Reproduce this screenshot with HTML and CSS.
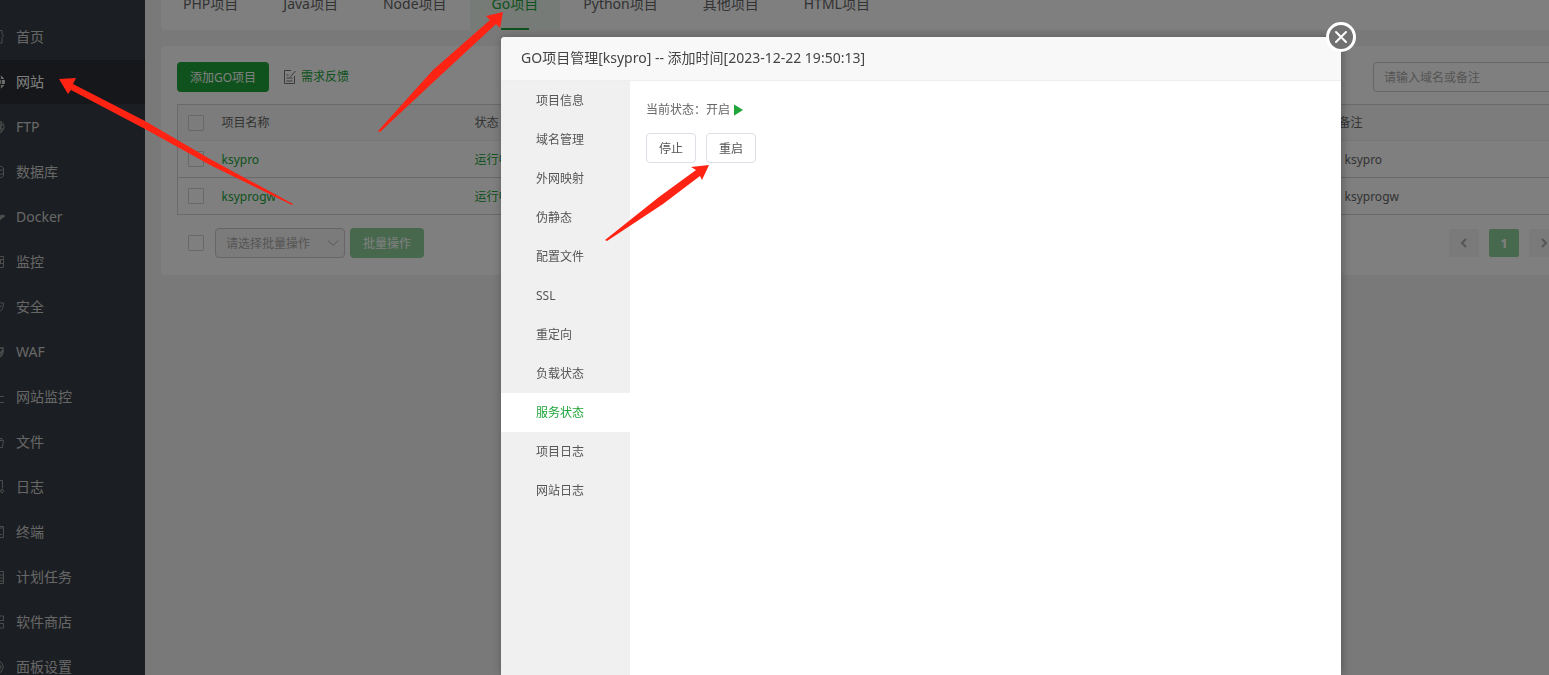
FILE: index.html
```
<!DOCTYPE html>
<html lang="zh-CN">
<head>
    <meta charset="UTF-8">
    <title>网站</title>
    <link rel="stylesheet" href="styles.css">
</head>
<body>
<div class="page">
    <nav class="sidebar">
        <a href="#"><svg viewBox="11 0 5 16"><path d="M8 1.500h5v3l1.500 2.500-1.500 1.500v5.500H9"/></svg>首页</a>
        <a href="#" class="active"><svg viewBox="11 0 5 16"><circle cx="9" cy="8" r="6.500" class="fill"/><path class="dark" d="M11 1q3 7 0 14M8 5.500h8M8 10.500h8"/></svg>网站</a>
        <a href="#"><svg viewBox="11 0 5 16"><circle cx="9" cy="8" r="6"/><path d="M10 2q3 6 0 12M8 6h7M8 10h7M12 2v12"/></svg>FTP</a>
        <a href="#"><svg viewBox="11 0 5 16"><path d="M8 2q6 0 6.500 2v8q-1 2-6.500 2M8 6.500q5 0 6.500-1M8 10.500q5 0 6.500-1"/></svg>数据库</a>
        <a href="#"><svg viewBox="11 0 5 16"><path class="fill" d="M6 7h5l2-1 3 1-3 2-4 4H6z"/></svg>Docker</a>
        <a href="#"><svg viewBox="11 0 5 16"><path d="M8 2.500h6.500v11H8M11.500 5v4M8 9.500h6M12 5.500h2"/></svg>监控</a>
        <a href="#"><svg viewBox="11 0 5 16"><path d="M8 2.500q3 2 6.500 1.500 0 8-6.500 10M9 10l4-4"/></svg>安全</a>
        <a href="#"><svg viewBox="11 0 5 16"><path d="M8 2.500q3 2 6 1.500 1 8-6 10M9 8l2 1.500 2.500-3" stroke-width="1.500"/></svg>WAF</a>
        <a href="#"><svg viewBox="11 0 5 16"><path d="M9 7.500h6M9 13.500h6"/></svg>网站监控</a>
        <a href="#"><svg viewBox="11 0 5 16"><path d="M8 4.500h5v2M8 6.500h6.500l-1 7H8"/></svg>文件</a>
        <a href="#"><svg viewBox="11 0 5 16"><path d="M8 1.500h5.500v8M8 13.500h3"/><circle cx="13" cy="12" r="1.500"/></svg>日志</a>
        <a href="#"><svg viewBox="11 0 5 16"><path d="M8 2.500h6.500v11H8M8 4h6M11 10.500h2"/></svg>终端</a>
        <a href="#"><svg viewBox="11 0 5 16"><path d="M8 2.500h6.500v12H8M8 6h6M8 9h6M8 12h6"/></svg>计划任务</a>
        <a href="#"><svg viewBox="11 0 5 16"><path d="M10 2h4.500v4.500H10zM10 9.500h4.500V14H10z"/></svg>软件商店</a>
        <a href="#"><svg viewBox="11 0 5 16"><path d="M9 2l3 1 2.500 5-2.500 5-3 1"/><circle cx="10" cy="8" r="2"/></svg>面板设置</a>
    </nav>

    <main class="main">
        <div class="card tabs">
            <a href="#">PHP项目</a>
            <a href="#">Java项目</a>
            <a href="#">Node项目</a>
            <a href="#" class="active">Go项目</a>
            <a href="#">Python项目</a>
            <a href="#">其他项目</a>
            <a href="#">HTML项目</a>
        </div>

        <div class="card list">
            <div class="toolbar">
                <button class="btn green">添加GO项目</button>
                <a href="#" class="feedback">
                    <svg viewBox="0 0 14 14"><path d="M8 .500H1.500v13h10V6M12.500 1L7.500 6.500M3.500 5h2M3.500 8h6M3.500 11h6"/></svg>需求反馈</a>
                <input class="search" type="text" placeholder="请输入域名或备注" aria-label="搜索">
            </div>

            <table>
                <thead>
                <tr>
                    <th class="col-check"><input type="checkbox" aria-label="全选"></th>
                    <th class="col-name">项目名称</th>
                    <th class="col-status">状态</th>
                    <th class="col-note">备注</th>
                </tr>
                </thead>
                <tbody>
                <tr>
                    <td class="col-check"><input type="checkbox" aria-label="ksypro"></td>
                    <td><a href="#">ksypro</a></td>
                    <td><a href="#">运行中</a></td>
                    <td class="note">ksypro</td>
                </tr>
                <tr>
                    <td class="col-check"><input type="checkbox" aria-label="ksyprogw"></td>
                    <td><a href="#">ksyprogw</a></td>
                    <td><a href="#">运行中</a></td>
                    <td class="note">ksyprogw</td>
                </tr>
                </tbody>
            </table>

            <div class="batch">
                <input type="checkbox" aria-label="选择全部">
                <div class="select">
                    <select aria-label="批量操作" disabled>
                        <option>请选择批量操作</option>
                    </select>
                    <svg viewBox="0 0 12 8"><path d="M1 1.500l5 5 5-5"/></svg>
                </div>
                <button class="btn green" disabled>批量操作</button>
                <div class="pager">
                    <button aria-label="上一页"><svg viewBox="0 0 8 10"><path d="M6 1L2 5l4 4"/></svg></button>
                    <button class="current">1</button>
                    <button aria-label="下一页"><svg viewBox="0 0 8 10"><path d="M2 1l4 4-4 4"/></svg></button>
                </div>
            </div>
        </div>
    </main>
</div>

<div class="shade"></div>

<div class="dialog" role="dialog" aria-labelledby="dialog-title">
    <div class="dialog-title" id="dialog-title">GO项目管理[ksypro] -- 添加时间[2023-12-22 19:50:13]</div>
    <button class="close" aria-label="关闭"><svg viewBox="0 0 14 14"><path d="M2 2l10 10M12 2L2 12"/></svg></button>
    <div class="dialog-body">
        <nav class="menu">
            <a href="#">项目信息</a>
            <a href="#">域名管理</a>
            <a href="#">外网映射</a>
            <a href="#">伪静态</a>
            <a href="#">配置文件</a>
            <a href="#">SSL</a>
            <a href="#">重定向</a>
            <a href="#">负载状态</a>
            <a href="#" class="active">服务状态</a>
            <a href="#">项目日志</a>
            <a href="#">网站日志</a>
        </nav>
        <div class="service">
            <p>当前状态：<span>开启</span><svg viewBox="0 0 9 12"><path d="M0 1q0-1 1 0l8 5-8 5q-1 1-1 0z"/></svg></p>
            <div class="actions">
                <button class="btn">停止</button>
                <button class="btn">重启</button>
            </div>
        </div>
    </div>
</div>

<!-- red pointer arrows -->
<svg class="arrows" width="1549" height="675" viewBox="0 0 1549 675">
    <path d="M59 79L76 78 73 84 145 121 210 159 293 204 292 205 210 165 145 129 71 90 68 94z"/>
    <path d="M503 12L500 28 496 24 442 74 380 132 378 131 433 70 490 20 486 16z"/>
    <path d="M709 165L702 180 700 176 663 204 607 241 605 240 659 197 696 170 691 167z"/>
</svg>
</body>
</html>
```
FILE: styles.css
```
* {
    box-sizing: border-box;
}

body {
    margin: 0;
    height: 100vh;
    overflow: hidden;
    position: relative;
    font-family: "Noto Sans", "Noto Sans CJK SC", sans-serif;
    font-size: 12px;
    line-height: 18px;
    color: #666;
}

a {
    color: #20a53a;
    text-decoration: none;
}

button, input, select {
    font-family: inherit;
    font-size: 12px;
    margin: 0;
}

svg {
    fill: none;
    stroke: currentColor;
}

.page {
    display: flex;
    height: 100%;
    background: #f3f3f3;
}

/* left menu */
.sidebar {
    flex: none;
    width: 145px;
    padding-top: 15px;
    overflow: hidden;
    background: #373d44;
}

.sidebar a {
    display: flex;
    align-items: center;
    gap: 11px;
    height: 44px;
    margin-bottom: 1px;
    font-size: 14px;
    color: #cfcfcf;
}

.sidebar svg {
    width: 5px;
    height: 16px;
    color: #999;
}

.sidebar .active {
    background: #2c2f34;
    color: #fff;
}

.sidebar .active svg {
    color: #ddd;
}

.fill {
    fill: currentColor;
}

.dark {
    stroke: #2c2f34;
}

/* the content runs on past the right edge of the window */
.main {
    flex: 1;
    margin: 0 -36px 0 16px;
}

.card {
    background: #fff;
    border-radius: 4px;
}

.tabs {
    display: flex;
    gap: 1px;
    height: 52px;
    margin-top: -22px;
    margin-bottom: 16px;
}

.tabs a {
    position: relative;
    padding: 0 22px;
    font-size: 14px;
    line-height: 52px;
    color: #666;
}

.tabs .active {
    background: #edf7ef;
    color: #20a53a;
}

.tabs .active::after {
    content: "";
    position: absolute;
    left: 50%;
    bottom: 0;
    width: 28px;
    height: 2px;
    margin-left: -14px;
    background: #20a53a;
}

.list {
    padding: 16px;
}

.toolbar {
    display: flex;
    align-items: center;
    margin-bottom: 12px;
}

.btn {
    height: 30px;
    padding: 0 12px;
    border: 1px solid #dcdfe6;
    border-radius: 4px;
    background: #fff;
    color: #555;
    white-space: nowrap;
}

.green {
    padding: 0 13px;
    border: 0;
    background: #20a53a;
    color: #fff;
}

.green:disabled {
    opacity: 0.5;
}

.feedback {
    display: flex;
    align-items: center;
    gap: 4px;
    margin-left: 14px;
    line-height: 20px;
}

.feedback svg {
    width: 14px;
    height: 14px;
    color: #777;
}

.search {
    width: 196px;
    height: 30px;
    margin-left: auto;
    padding: 0 10px;
    border: 1px solid #ccc;
    border-radius: 4px;
    background: transparent;
}

.search::placeholder {
    color: #aaa;
}

table {
    width: 100%;
    table-layout: fixed;
    border-collapse: collapse;
    border: 1px solid #d4d4d4;
}

th, td {
    height: 37px;
    padding: 0;
    border-bottom: 1px solid #d4d4d4;
    text-align: left;
    font-weight: normal;
}

td {
    padding-top: 2px;
}

th {
    height: 36px;
    border-bottom-color: #eee;
    background: #f8f8f8;
}

.col-check {
    width: 44px;
    padding: 0 0 0 10px;
}

.col-name {
    width: 253px;
}

.col-note {
    width: 230px;
}

.note {
    padding-left: 6px;
}

input[type="checkbox"] {
    appearance: none;
    display: block;
    width: 16px;
    height: 16px;
    border: 1px solid #d0d0d0;
    border-radius: 1px;
}

.batch {
    display: flex;
    align-items: center;
    padding: 13px 0 1px 11px;
}

.select {
    position: relative;
    margin: 0 5px 0 11px;
}

.select select {
    appearance: none;
    display: block;
    width: 130px;
    height: 30px;
    padding: 0 10px;
    border: 1px solid #ccc;
    border-radius: 4px;
    background: #f7f7f7;
    color: #aaa;
    opacity: 1;
}

.select svg {
    position: absolute;
    top: 11px;
    right: 6px;
    width: 12px;
    height: 8px;
    color: #aaa;
}

.pager {
    display: flex;
    gap: 10px;
    margin-left: auto;
    margin-right: 10px;
}

.pager button {
    width: 30px;
    height: 28px;
    padding: 0;
    border: 0;
    border-radius: 2px;
    background: #f4f4f5;
    color: #aaa;
}

.pager svg {
    width: 8px;
    height: 10px;
    stroke-width: 2;
}

.pager .current {
    background: #8fd29c;
    color: #fff;
    font-size: 13px;
    font-weight: bold;
}

.shade {
    position: fixed;
    inset: 0;
    background: rgba(0, 0, 0, 0.5);
}

/* project dialog */
.dialog {
    position: absolute;
    top: 37px;
    bottom: 0;
    left: 501px;
    width: 840px;
    display: flex;
    flex-direction: column;
    border-radius: 4px 4px 0 0;
    background: #fff;
    box-shadow: 1px 1px 10px rgba(0, 0, 0, 0.3);
}

.dialog-title {
    height: 44px;
    padding: 0 20px;
    border-bottom: 1px solid #eee;
    border-radius: 4px 4px 0 0;
    background: #f8f8f8;
    font-size: 14px;
    line-height: 42px;
    color: #444;
}

.close {
    position: absolute;
    top: -15px;
    right: -15px;
    display: flex;
    align-items: center;
    justify-content: center;
    width: 30px;
    height: 30px;
    padding: 0;
    border: 3px solid #fff;
    border-radius: 50%;
    background: #717171;
    color: #fff;
}

.close svg {
    width: 14px;
    height: 14px;
    stroke-width: 2;
    stroke-linecap: round;
}

.dialog-body {
    flex: 1;
    display: flex;
}

.menu {
    width: 129px;
    background: #f0f0f0;
}

.menu a {
    display: block;
    height: 39px;
    padding-left: 35px;
    line-height: 39px;
    color: #555;
}

.menu .active {
    background: #fff;
    color: #20a53a;
}

.service {
    padding: 20px 16px;
}

.service p {
    display: flex;
    align-items: center;
    margin: 0 0 14px;
}

.service svg {
    width: 9px;
    height: 12px;
    margin-left: 4px;
    fill: #20a53a;
    stroke: none;
}

.actions {
    display: flex;
    gap: 10px;
}

.arrows {
    position: absolute;
    top: 0;
    left: 0;
    pointer-events: none;
    fill: #ff2314;
    stroke: none;
}
```
